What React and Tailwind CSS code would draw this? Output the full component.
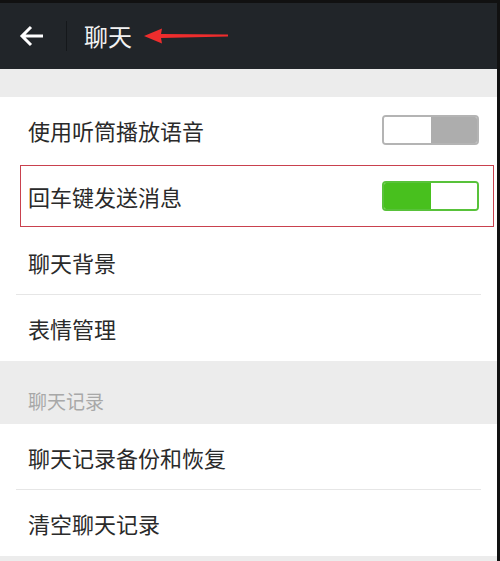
import { useState } from "react";

const cjk = { fontFamily: '"Noto Sans CJK SC", "Noto Sans", sans-serif' };

function Toggle({ on }) {
  if (on) {
    return (
      <div className="flex w-[97px] h-[30px] rounded-[4px] border-2 border-[#58c23a] overflow-hidden">
        <div className="w-1/2 bg-[#48c01e]" />
        <div className="w-1/2 bg-white" />
      </div>
    );
  }
  return (
    <div className="flex w-[97px] h-[30px] rounded-[4px] border-2 border-[#b4b4b4] overflow-hidden">
      <div className="w-1/2 bg-white" />
      <div className="w-1/2 bg-[#adadad]" />
    </div>
  );
}

function Row({ label, children, divider }) {
  return (
    <div className="h-[66px] flex items-center pl-[28px] pr-[18px] relative">
      <span className="text-[22px] text-[#2a2a2a] flex-1">{label}</span>
      {children}
      {divider && <div className="absolute left-[16px] right-[16px] bottom-0 h-px bg-[#e6e6e6]" />}
    </div>
  );
}

export default function App() {
  const [enviar] = useState(true);

  return (
    <div className="w-[500px] h-[561px] bg-[#ececec] border-t-[3px] border-r-[3px] border-[#111] overflow-hidden" style={cjk}>
      <div className="h-[66px] bg-[#212529] flex items-center">
        <div className="w-[66px] flex justify-center">
          <svg width="26" height="22" viewBox="0 0 26 22" className="ml-[-2px]">
            <path d="M24 11H3M12 2L3 11l9 9" stroke="#fff" strokeWidth="3" fill="none" />
          </svg>
        </div>
        <div className="w-px h-[30px] bg-[#15181b]" />
        <span className="ml-[17px] text-[24px] text-[#f2f2f2]">聊天</span>
        <svg width="90" height="16" viewBox="0 0 90 16" className="ml-[12px]">
          <path d="M0 8L18 0.5L17 6L84 6.5L84 8.5L17 10L18 15.5Z" fill="#ee2d2d" />
        </svg>
      </div>

      <div className="h-[28px] bg-[#ececec]" />

      <div className="bg-white">
        <Row label="使用听筒播放语音">
          <Toggle on={false} />
        </Row>
        <div className="h-[66px] flex items-center pl-[20px] pr-[3px] py-[2px]">
          <div className="flex-1 h-[62px] border border-[#c9414e] flex items-center pl-[7px] pr-[14px]">
            <span className="text-[22px] text-[#2a2a2a] flex-1">回车键发送消息</span>
            <Toggle on={enviar} />
          </div>
        </div>
        <Row label="聊天背景" divider />
        <Row label="表情管理" />
      </div>

      <div className="h-[63px] flex items-end pl-[28px] pb-[9px]">
        <span className="text-[19px] text-[#a8a8a8]">聊天记录</span>
      </div>

      <div className="bg-white">
        <Row label="聊天记录备份和恢复" divider />
        <Row label="清空聊天记录" />
      </div>
    </div>
  );
}
